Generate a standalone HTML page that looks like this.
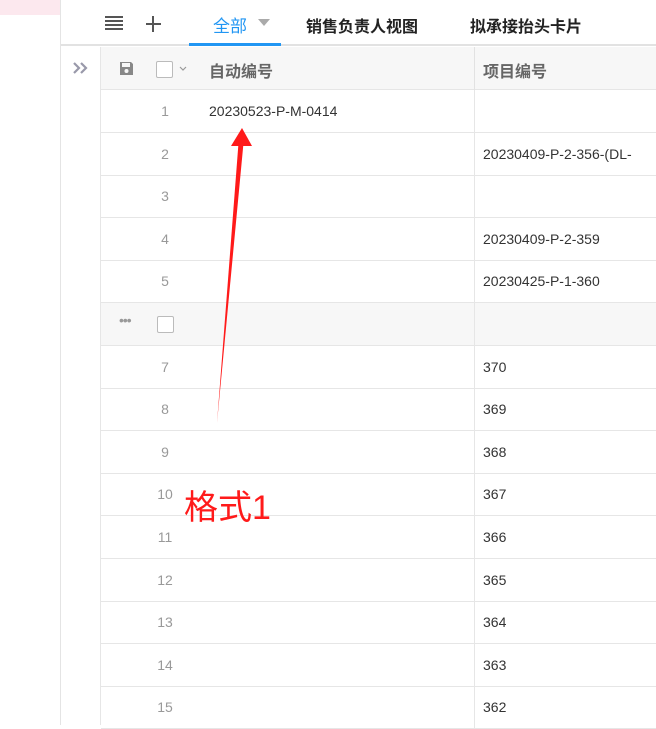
<!DOCTYPE html>
<html><head><meta charset="utf-8"><style>
*{margin:0;padding:0;box-sizing:border-box}
body{width:656px;height:725px;overflow:hidden;background:#fff;position:relative;font-family:"Liberation Sans","Noto Sans CJK SC",sans-serif;}
.a{position:absolute}
.row{position:absolute;left:101px;width:555px;height:43px;border-bottom:1px solid #e6e6e6;background:transparent}
.row .n{position:absolute;left:44px;width:40px;text-align:center;top:13px;font-size:14px;color:#999}
.row .c1{position:absolute;left:108px;top:13px;font-size:14px;color:#333}
.row .c2{position:absolute;left:382px;top:13px;font-size:14px;color:#333}
.row .v{position:absolute;left:373px;top:0;bottom:-1px;border-left:1px solid #e6e6e6}
</style></head><body>
<div class="a" style="left:0;top:0;width:60px;height:15px;background:#fce8ee"></div>
<div class="a" style="left:60px;top:0;width:1px;height:725px;background:#e4e4e4"></div>
<!-- tab bar -->
<div class="a" style="left:61px;top:44px;width:595px;height:2px;background:#e2e2e2"></div>
<div class="a" style="left:189px;top:43px;width:92px;height:3px;background:#2196f3"></div>
<div class="a" style="left:105px;top:16px;width:18px;height:2px;background:#555;box-shadow:0 4px 0 #555,0 8px 0 #555,0 12px 0 #555"></div>
<div class="a" style="left:146px;top:23px;width:15px;height:2px;background:#555"></div>
<div class="a" style="left:152px;top:16px;width:2px;height:16px;background:#555"></div>
<div class="a" style="left:213px;top:12px;font-size:17px;color:#2196f3">全部</div>
<div class="a" style="left:258px;top:19px;width:0;height:0;border-left:6px solid transparent;border-right:6px solid transparent;border-top:7px solid #aaa"></div>
<div class="a" style="left:306px;top:13px;font-size:16px;color:#222;font-weight:bold">销售负责人视图</div>
<div class="a" style="left:470px;top:13px;font-size:16px;color:#222;font-weight:bold">拟承接抬头卡片</div>
<!-- gutter -->
<svg class="a" style="left:73px;top:62px" width="16" height="12" viewBox="0 0 16 12"><path d="M1 1l5 5-5 5M8 1l5 5-5 5" fill="none" stroke="#99a" stroke-width="2.2"/></svg>
<div class="a" style="left:100px;top:47px;width:1px;height:678px;background:#e6e6e6"></div>
<!-- header -->
<div class="a" style="left:101px;top:47px;width:555px;height:43px;background:#f7f7f7;border-bottom:1px solid #e6e6e6"></div>
<div class="a" style="left:474px;top:47px;width:1px;height:43px;background:#e2e2e2"></div>
<svg class="a" style="left:119px;top:61px" width="15" height="15" viewBox="0 0 15 15"><path d="M1 1h11l2 2v11H1z" fill="#888"/><rect x="3" y="2" width="8" height="4" fill="#f7f7f7"/><circle cx="7.5" cy="10" r="2" fill="#f7f7f7"/></svg>
<div class="a" style="left:156px;top:61px;width:17px;height:17px;border:1px solid #bbb;border-radius:2px;background:#fff"></div>
<svg class="a" style="left:179px;top:66px" width="8" height="6" viewBox="0 0 8 6"><path d="M1 1l3 3 3-3" fill="none" stroke="#999" stroke-width="1.2"/></svg>
<div class="a" style="left:209px;top:58px;font-size:16px;color:#666;font-weight:bold">自动编号</div>
<div class="a" style="left:483px;top:58px;font-size:16px;color:#666;font-weight:bold">项目编号</div>
<!-- rows -->
<div class="row" style="top:90px"><div class="v"></div><div class="n">1</div><div class="c1">20230523-P-M-0414</div></div>
<div class="row" style="top:133px"><div class="v"></div><div class="n">2</div><div class="c2">20230409-P-2-356-(DL-</div></div>
<div class="row" style="top:175px"><div class="v"></div><div class="n">3</div></div>
<div class="row" style="top:218px"><div class="v"></div><div class="n">4</div><div class="c2">20230409-P-2-359</div></div>
<div class="row" style="top:260px"><div class="v"></div><div class="n">5</div><div class="c2">20230425-P-1-360</div></div>
<div class="row" style="top:303px;background:#f7f7f7"><div class="v"></div><div class="a" style="left:18px;top:9px;font-size:14px;color:#999;letter-spacing:-1px">•••</div><div class="a" style="left:56px;top:13px;width:17px;height:17px;border:1px solid #bbb;border-radius:2px;background:#fff"></div></div>
<div class="row" style="top:346px"><div class="v"></div><div class="n">7</div><div class="c2">370</div></div>
<div class="row" style="top:388px"><div class="v"></div><div class="n">8</div><div class="c2">369</div></div>
<div class="row" style="top:431px"><div class="v"></div><div class="n">9</div><div class="c2">368</div></div>
<div class="row" style="top:473px"><div class="v"></div><div class="n">10</div><div class="c2">367</div></div>
<div class="row" style="top:516px"><div class="v"></div><div class="n">11</div><div class="c2">366</div></div>
<div class="row" style="top:559px"><div class="v"></div><div class="n">12</div><div class="c2">365</div></div>
<div class="row" style="top:601px"><div class="v"></div><div class="n">13</div><div class="c2">364</div></div>
<div class="row" style="top:644px"><div class="v"></div><div class="n">14</div><div class="c2">363</div></div>
<div class="row" style="top:686px"><div class="v"></div><div class="n">15</div><div class="c2">362</div></div>
<!-- annotation -->
<svg class="a" style="left:0;top:0" width="656" height="725"><path d="M217 423 L238.5 143 L243.5 143 Z" fill="#ff1a1a"/><path d="M242 128 L231 146 L252 146 Z" fill="#ff1a1a"/></svg>
<div class="a" style="left:184px;top:488px;font-size:34px;color:#ff1a1a;line-height:40px">格式1</div>
</body></html>
